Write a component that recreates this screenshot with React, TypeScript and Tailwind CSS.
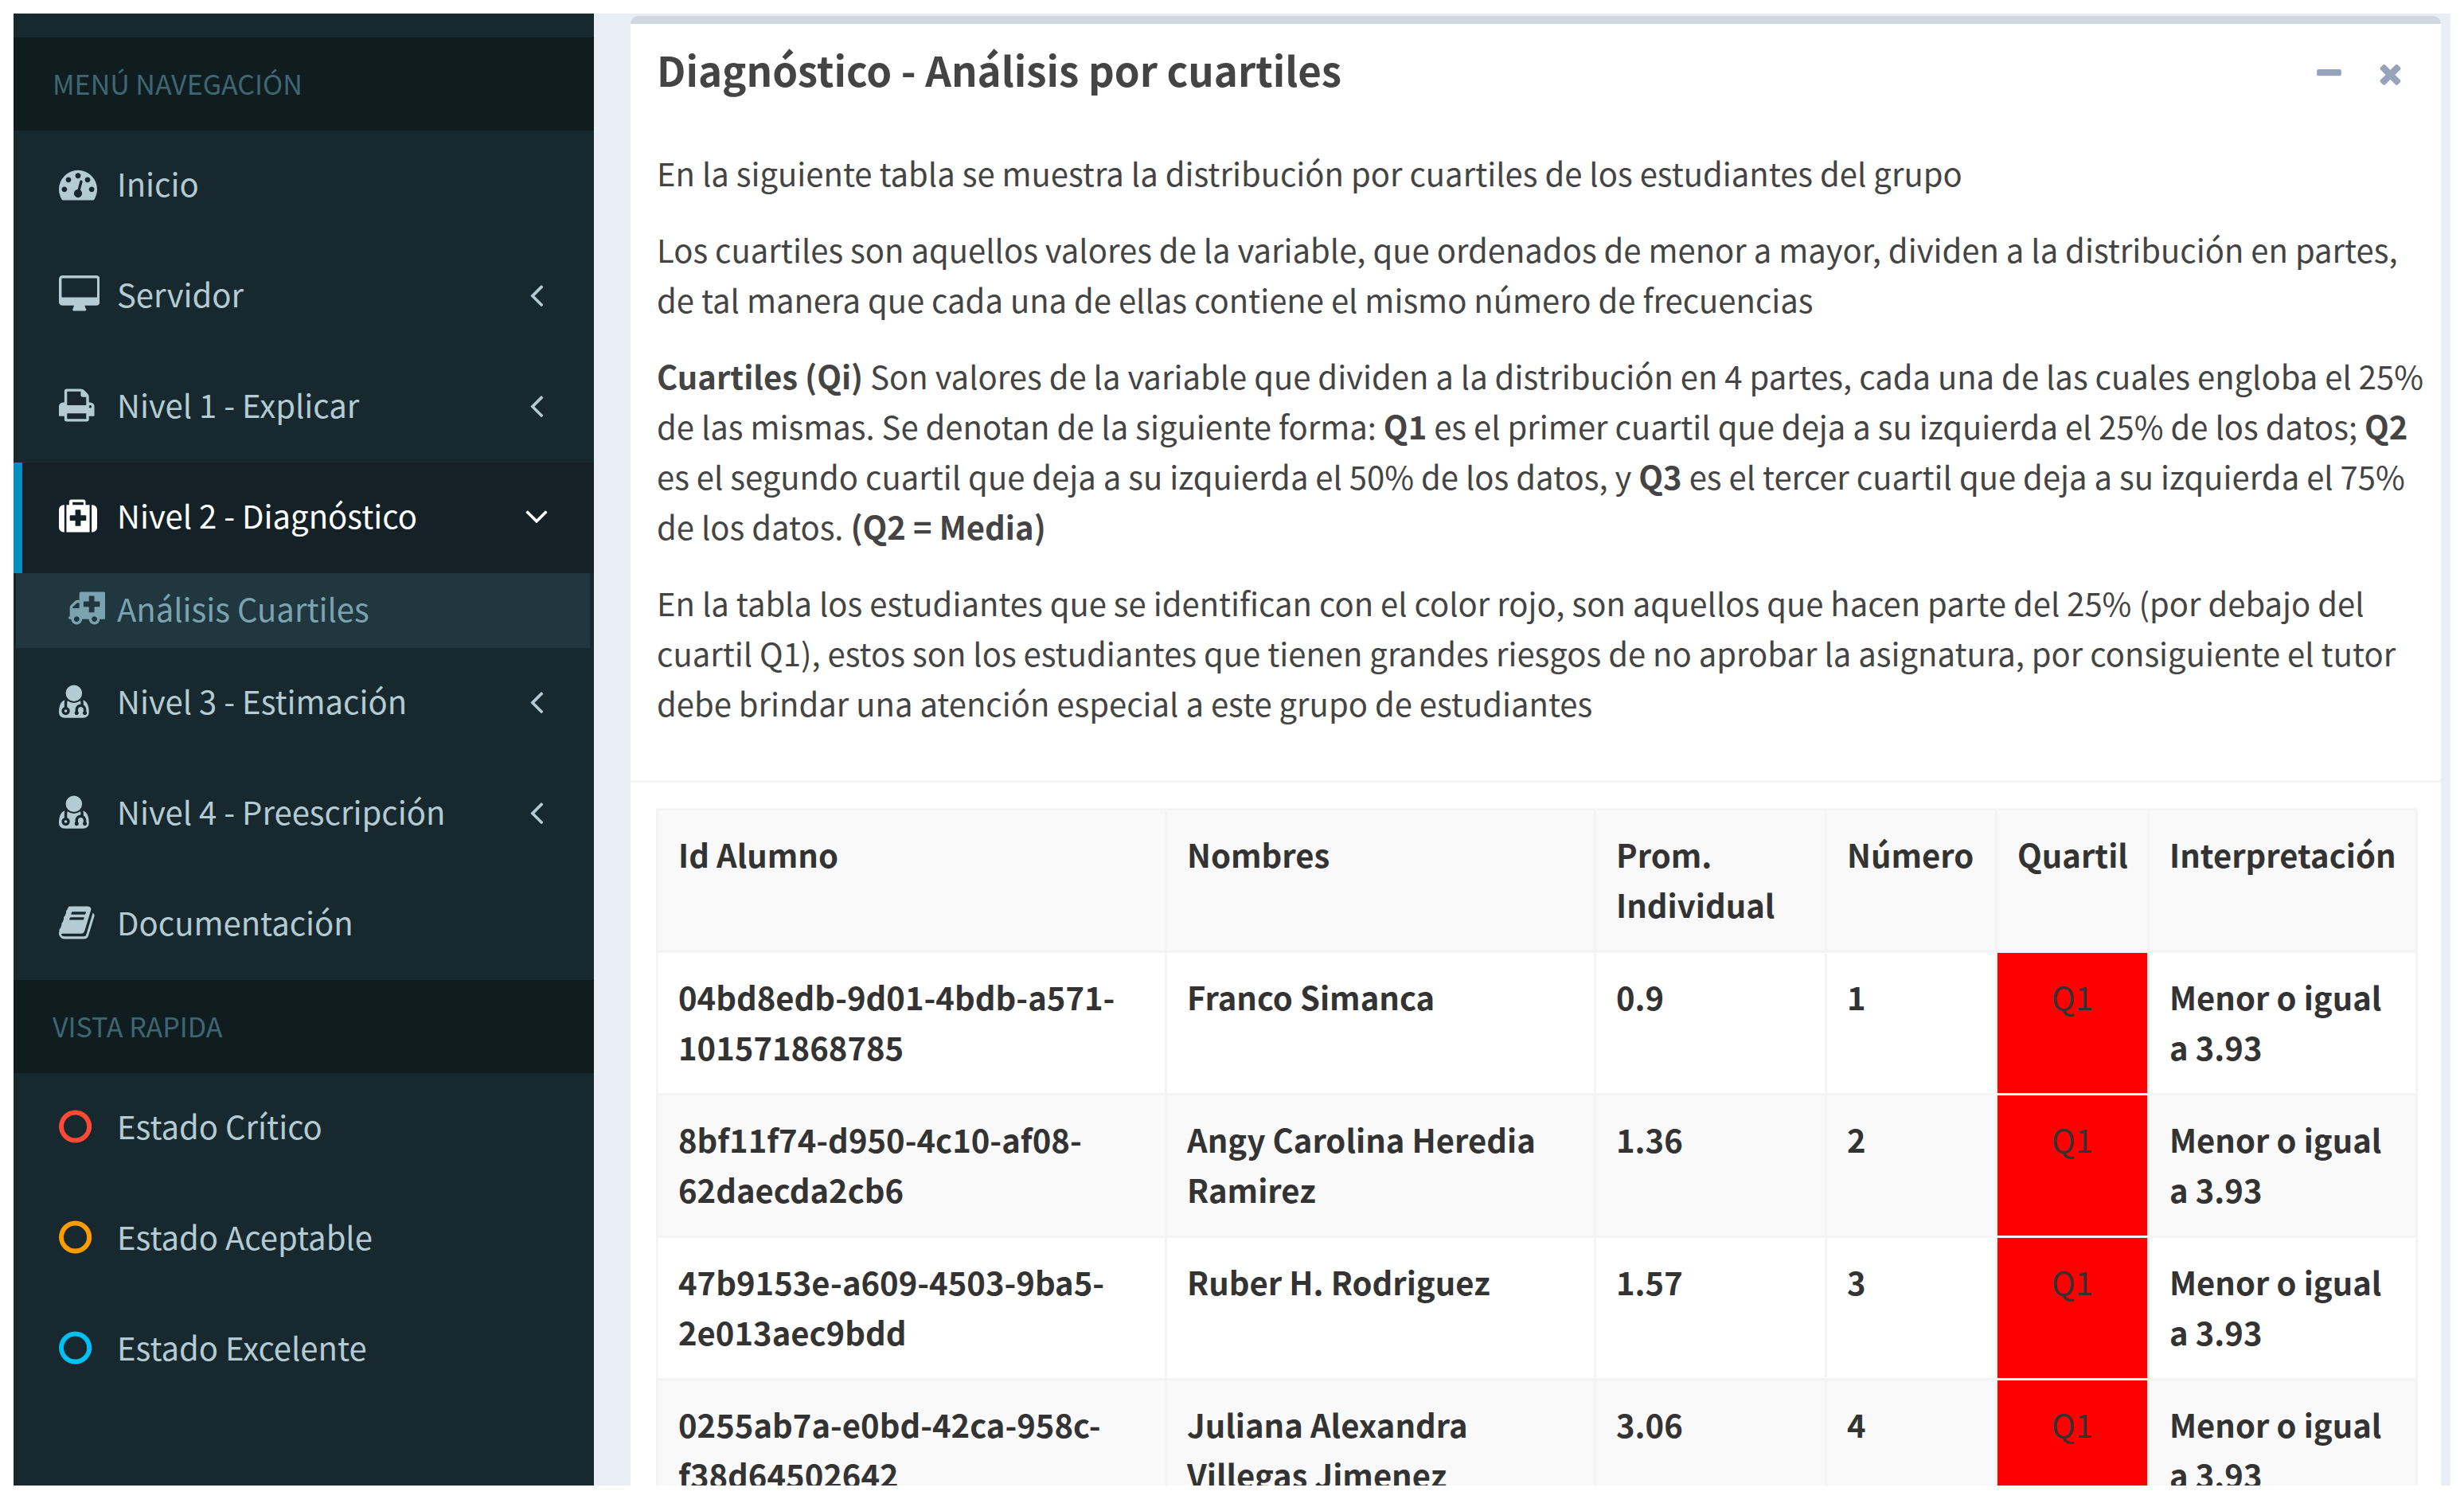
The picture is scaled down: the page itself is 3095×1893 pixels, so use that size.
import type { ReactNode } from 'react';

interface IconProps {
  path: string;
  width?: number;
  left?: number;
  className?: string;
}

// Glyphs live on a 1792 unit tall grid, only the advance width changes
function Icon({ path, width = 1792, left = 0, className = 'h-[48px]' }: IconProps) {
  return (
    <svg
      aria-hidden="true"
      viewBox={`${left} 0 ${width} 1792`}
      className={`block w-auto shrink-0 ${className}`}
      fill="currentColor"
      fillRule="evenodd"
    >
      <path d={path} />
    </svg>
  );
}

const DASHBOARD =
  'M384 1152q0-53-37.5-90.5t-90.5-37.5-90.5 37.5-37.5 90.5 37.5 90.5 90.5 37.5 90.5-37.5 37.5-90.5zm192-448q0-53-37.5-90.5t-90.5-37.5-90.5 37.5-37.5 90.5 37.5 90.5 90.5 37.5 90.5-37.5 37.5-90.5zm428 481l101-382q6-26-7.5-48.5t-38.5-29.5-48 6.5-30 39.5l-101 382q-60 5-107 43.5t-63 98.5q-20 77 20 146t117 89 146-20 89-117q16-60-6-117t-72-91zm660-33q0-53-37.5-90.5t-90.5-37.5-90.5 37.5-37.5 90.5 37.5 90.5 90.5 37.5 90.5-37.5 37.5-90.5zm-640-640q0-53-37.5-90.5t-90.5-37.5-90.5 37.5-37.5 90.5 37.5 90.5 90.5 37.5 90.5-37.5 37.5-90.5zm448 192q0-53-37.5-90.5t-90.5-37.5-90.5 37.5-37.5 90.5 37.5 90.5 90.5 37.5 90.5-37.5 37.5-90.5zm320 448q0 261-141 483-19 29-54 29h-1402q-35 0-54-29-141-221-141-483 0-182 71-348t191-286 286-191 348-71 348 71 286 191 191 286 71 348z';
const DESKTOP =
  'M1792 992v-832q0-13-9.5-22.5t-22.5-9.5h-1600q-13 0-22.5 9.5t-9.5 22.5v832q0 13 9.5 22.5t22.5 9.5h1600q13 0 22.5-9.5t9.5-22.5zm128-832v1088q0 66-47 113t-113 47h-544q0 37 16 77.5t32 71 16 43.5q0 26-19 45t-45 19h-512q-26 0-45-19t-19-45q0-14 16-44t32-70 16-78h-544q-66 0-113-47t-47-113v-1088q0-66 47-113t113-47h1600q66 0 113 47t47 113z';
const PRINT =
  'M448 1536h896v-256h-896v256zm0-640h896v-384h-160q-40 0-68-28t-28-68v-160h-640v640zm1152 64q0-26-19-45t-45-19-45 19-19 45 19 45 45 19 45-19 19-45zm128 0v416q0 13-9.5 22.5t-22.5 9.5h-224v160q0 40-28 68t-68 28h-960q-40 0-68-28t-28-68v-160h-224q-13 0-22.5-9.5t-9.5-22.5v-416q0-79 56.5-135.5t135.5-56.5h64v-544q0-40 28-68t68-28h672q40 0 88 20t76 48l152 152q28 28 48 76t20 88v256h64q79 0 135.5 56.5t56.5 135.5z';
const MEDKIT =
  'M1280 1088v-192q0-14-9-23t-23-9h-224v-224q0-14-9-23t-23-9h-192q-14 0-23 9t-9 23v224h-224q-14 0-23 9t-9 23v192q0 14 9 23t23 9h224v224q0 14 9 23t23 9h192q14 0 23-9t9-23v-224h224q14 0 23-9t9-23zm-640-704h512v-128h-512v128zm-384 0v1280h-32q-92 0-158-66t-66-158v-832q0-92 66-158t158-66h32zm1184 0v1280h-1088v-1280h128v-160q0-40 28-68t68-28h576q40 0 68 28t28 68v160h128zm352 224v832q0 92-66 158t-158 66h-32v-1280h32q92 0 158 66t66 158z';
const AMBULANCE =
  'M576 1408q0-52-38-90t-90-38-90 38-38 90 38 90 90 38 90-38 38-90zM256 896H576V640H482q-14 2-22 9L265 844q-7 12-9 22v30zM1408 1408q0-52-38-90t-90-38-90 38-38 90 38 90 90 38 90-38 38-90zM1536 800v-192q0-14-9-23t-23-9h-224v-224q0-14-9-23t-23-9h-192q-14 0-23 9t-9 23v224h-224q-14 0-23 9t-9 23v192q0 14 9 23t23 9h224v224q0 14 9 23t23 9h192q14 0 23-9t9-23v-224h224q14 0 23-9t9-23zM1792 192v1152q0 26-19 45t-45 19h-192q0 106-75 181t-181 75-181-75-75-181h-320q0 106-75 181t-181 75-181-75-75-181h-64q-26 0-45-19t-19-45 19-45 45-19v-416q0-26 13-58t32-51l198-198q19-19 51-32t58-13h96v-320q0-26 19-45t45-19h1088q26 0 45 19t19 45z';
const USER_MD =
  'M384 1344q0 26-19 45t-45 19-45-19-19-45 19-45 45-19 45 19 19 45zm1024 64q0 121-73 191t-194 70h-874q-121 0-194-70t-73-192q0-68 5.5-131t24-138 47.5-132.5 81-103 120-60.5q-22 52-22 120v203q-58 20-93 70t-35 111q0 80 56 136t136 56 136-56 56-136q0-61-35.5-111t-92.5-70v-203q0-62 25-93 132 104 295 104t295-104q25 31 25 93v64q-106 0-181 75t-75 181v89q-32 29-32 71 0 40 28 68t68 28 68-28 28-68q0-42-32-71v-89q0-52 38-90t90-38 90 38 38 90v89q-32 29-32 71 0 40 28 68t68 28 68-28 28-68q0-42-32-71v-89q0-68-34.5-127.5t-93.5-93.5q0-10 .5-42.5t0-48-2.5-41.5-7-47-13-40q68 15 120 60.5t81 103 47.5 132.5 24 138 5.5 131zm-320-896q0 159-112.5 271.5t-271.5 112.5-271.5-112.5-112.5-271.5 112.5-271.5 271.5-112.5 271.5 112.5 112.5 271.5z';
const BOOK =
  'M1639 478q40 57 18 129l-275 906q-19 64-76.5 107.5t-122.5 43.5h-923q-77 0-148.5-53.5t-99.5-131.5q-24-67-2-127 0-4 3-27t4-37q1-8-3-21.5t-3-19.5q2-11 8-21t16.5-23.5 16.5-23.5q23-38 45-91.5t30-91.5q3-10 .5-30t-.5-28q3-11 17-28t17-23q21-36 42-92t25-90q1-9-2.5-32t.5-28q4-13 22-30.5t22-22.5q19-26 42.5-84.5t27.5-96.5q1-8-3-25.5t-2-26.5q2-8 9-18t18-23 17-21q8-12 16.5-30.5t15-35 16-36 19.5-32 26.5-23.5 36-11.5 47.5 5.5l-1 3q38-9 51-9h761q74 0 114 56t18 130l-274 906q-36 119-71.5 153.5t-128.5 34.5h-869q-27 0-38 15-11 16-1 43 24 70 144 70h923q29 0 56-15.5t35-41.5l300-987q7-22 5-57 38 15 59 43zm-1064 2q-4 13 2 22.5t20 9.5h608q13 0 25.5-9.5t16.5-22.5l21-64q4-13-2-22.5t-20-9.5h-608q-13 0-25.5 9.5t-16.5 22.5zm-83 256q-4 13 2 22.5t20 9.5h608q13 0 25.5-9.5t16.5-22.5l21-64q4-13-2-22.5t-20-9.5h-608q-13 0-25.5 9.5t-16.5 22.5z';
const CIRCLE_O = 'M768 128a768 768 0 1 0 0 1536a768 768 0 1 0 0-1536zM768 352a544 544 0 1 1 0 1088a544 544 0 1 1 0-1088z';
const ANGLE_LEFT =
  'M1203 544q0 13-10 23l-393 393 393 393q10 10 10 23t-10 23l-50 50q-10 10-23 10t-23-10l-466-466q-10-10-10-23t10-23l466-466q10-10 23-10t23 10l50 50q10 10 10 23z';
const ANGLE_DOWN =
  'M1395 736q0 13-10 23l-466 466q-10 10-23 10t-23-10l-466-466q-10-10-10-23t10-23l50-50q10-10 23-10t23 10l393 393 393-393q10-10 23-10t23 10l50 50q10 10 10 23z';
const MINUS =
  'M1600 736v192q0 40-28 68t-68 28h-1216q-40 0-68-28t-28-68v-192q0-40 28-68t68-28h1216q40 0 68 28t28 68z';
const TIMES =
  'M1490 1322q0 40-28 68l-136 136q-28 28-68 28t-68-28l-294-294-294 294q-28 28-68 28t-68-28l-136-136q-28-28-28-68t28-68l294-294-294-294q-28-28-28-68t28-68l136-136q28-28 68-28t68 28l294 294 294-294q28-28 68-28t68 28l136 136q28 28 28 68t-28 68l-294 294 294 294q28 28 28 68z';

interface MenuItemProps {
  label: string;
  icon: ReactNode;
  iconColor?: string;
  tree?: boolean;
  active?: boolean;
}

function MenuItem({ label, icon, iconColor = '', tree, active }: MenuItemProps) {
  return (
    <a
      href="#"
      aria-expanded={tree ? Boolean(active) : undefined}
      className={`flex h-[139px] items-center border-l-[11px] pr-12 pb-1.5 pl-[46px] ${
        active ? 'border-[#008fc0] bg-[#142228] text-white' : 'border-transparent text-[#b5cbd3]'
      }`}
    >
      <span className={`w-[73px] shrink-0 ${iconColor}`}>{icon}</span>
      <span className="grow">{label}</span>
      {tree && <Icon path={active ? ANGLE_DOWN : ANGLE_LEFT} />}
    </a>
  );
}

function MenuHeader({ children }: { children: ReactNode }) {
  return (
    <h2 className="flex h-[117px] items-center bg-[#0f1d21] pb-0.5 pl-[49px] text-[34px] text-[#3f6671]">
      {children}
    </h2>
  );
}

function Sidebar() {
  return (
    <aside className="w-[729px] shrink-0 bg-[#17292e] pt-[30px]">
      <nav>
        <MenuHeader>MENÚ NAVEGACIÓN</MenuHeader>
        <MenuItem label="Inicio" icon={<Icon path={DASHBOARD} />} />
        <MenuItem label="Servidor" icon={<Icon path={DESKTOP} width={1920} />} tree />
        <MenuItem label="Nivel 1 - Explicar" icon={<Icon path={PRINT} width={1664} left={64} />} tree />
        <MenuItem label="Nivel 2 - Diagnóstico" icon={<Icon path={MEDKIT} />} tree active />
        <a
          href="#"
          className="mr-[5px] ml-[3px] flex h-[94px] items-center bg-[#20373f] pb-1.5 pl-[66px] text-[#7ba3af]"
        >
          <span className="w-[61px] shrink-0">
            <Icon path={AMBULANCE} width={1728} left={64} />
          </span>
          Análisis Cuartiles
        </a>
        <MenuItem label="Nivel 3 - Estimación" icon={<Icon path={USER_MD} width={1408} />} tree />
        <MenuItem label="Nivel 4 - Preescripción" icon={<Icon path={USER_MD} width={1408} />} tree />
        <MenuItem label="Documentación" icon={<Icon path={BOOK} width={1664} />} />
        <MenuHeader>VISTA RAPIDA</MenuHeader>
        <MenuItem label="Estado Crítico" icon={<Icon path={CIRCLE_O} width={1536} />} iconColor="text-[#ff4a35]" />
        <MenuItem label="Estado Aceptable" icon={<Icon path={CIRCLE_O} width={1536} />} iconColor="text-[#ff9c00]" />
        <MenuItem label="Estado Excelente" icon={<Icon path={CIRCLE_O} width={1536} />} iconColor="text-[#00c0f5]" />
      </nav>
    </aside>
  );
}

const students = [
  { id: '04bd8edb-9d01-4bdb-a571-101571868785', name: 'Franco Simanca', average: '0.9' },
  { id: '8bf11f74-d950-4c10-af08-62daecda2cb6', name: 'Angy Carolina Heredia Ramirez', average: '1.36' },
  { id: '47b9153e-a609-4503-9ba5-2e013aec9bdd', name: 'Ruber H. Rodriguez', average: '1.57' },
  { id: '0255ab7a-e0bd-42ca-958c-f38d64502642', name: 'Juliana Alexandra Villegas Jimenez', average: '3.06' },
];

const cell = 'border-[3px] border-[#f4f4f4] px-[25px] pt-6 pb-[26px] align-top';

function QuartileTable() {
  return (
    <table className="w-full table-fixed border-collapse text-left font-bold text-[#333333]">
      <colgroup>
        <col />
        <col className="w-[539px]" />
        <col className="w-[290px]" />
        <col className="w-[214px]" />
        <col className="w-[191px]" />
        <col className="w-[337px]" />
      </colgroup>
      <thead>
        <tr className="bg-[#f9f9f9]">
          {['Id Alumno', 'Nombres', 'Prom. Individual', 'Número', 'Quartil', 'Interpretación'].map(title => (
            <th key={title} scope="col" className={cell}>
              {title}
            </th>
          ))}
        </tr>
      </thead>
      <tbody>
        {students.map((student, i) => (
          <tr key={student.id} className="even:bg-[#f9f9f9]">
            <td className={cell}>{student.id}</td>
            <td className={cell}>{student.name}</td>
            <td className={cell}>{student.average}</td>
            <td className={cell}>{i + 1}</td>
            <td className={`${cell} bg-[#ff0000] text-center font-normal`}>Q1</td>
            <td className={cell}>Menor o igual a 3.93</td>
          </tr>
        ))}
      </tbody>
    </table>
  );
}

export default function App() {
  return (
    <div className="h-screen overflow-hidden bg-white px-[17px] pt-[17px] pb-[27px] font-['Noto_Sans_CJK_SC',sans-serif] text-[40px] leading-[63px]">
      <div className="flex h-full overflow-hidden">
        <Sidebar />
        <main className="min-w-0 grow bg-[#e9edf5] pt-[3px] pr-3 pl-[46px]">
          <section className="rounded-t-[10px] border-t-[10px] border-[#d2d6e0] bg-white text-[#444444]">
            <header className="flex items-start justify-between py-8 pr-[44px] pl-[33px]">
              <h1 className="text-[51px] leading-[50px] font-bold">Diagnóstico - Análisis por cuartiles</h1>
              <div className="flex h-[60px] items-center gap-[38px] text-[#97a3ba]">
                <button type="button" aria-label="Minimizar">
                  <Icon path={MINUS} className="h-[39px]" />
                </button>
                <button type="button" aria-label="Cerrar">
                  <Icon path={TIMES} className="h-[39px]" />
                </button>
              </div>
            </header>

            <div className="space-y-[33px] border-b-[3px] border-[#f4f4f4] pt-8 pr-[14px] pb-[65px] pl-[33px]">
              <p>En la siguiente tabla se muestra la distribución por cuartiles de los estudiantes del grupo</p>
              <p>
                Los cuartiles son aquellos valores de la variable, que ordenados de menor a mayor, dividen a la
                distribución en partes, de tal manera que cada una de ellas contiene el mismo número de frecuencias
              </p>
              <p>
                <b>Cuartiles (Qi)</b> Son valores de la variable que dividen a la distribución en 4 partes, cada una de
                las cuales engloba el 25% de las mismas. Se denotan de la siguiente forma: <b>Q1</b> es el primer
                cuartil que deja a su izquierda el 25% de los datos; <b>Q2</b> es el segundo cuartil que deja a su
                izquierda el 50% de los datos, y <b>Q3</b> es el tercer cuartil que deja a su izquierda el 75% de los
                datos. <b>(Q2 = Media)</b>
              </p>
              <p>
                En la tabla los estudiantes que se identifican con el color rojo, son aquellos que hacen parte del 25%
                (por debajo del cuartil Q1), estos son los estudiantes que tienen grandes riesgos de no aprobar la
                asignatura, por consiguiente el tutor debe brindar una atención especial a este grupo de estudiantes
              </p>
            </div>

            <div className="pt-8 pr-[29px] pl-8">
              <QuartileTable />
            </div>
          </section>
        </main>
      </div>
    </div>
  );
}
